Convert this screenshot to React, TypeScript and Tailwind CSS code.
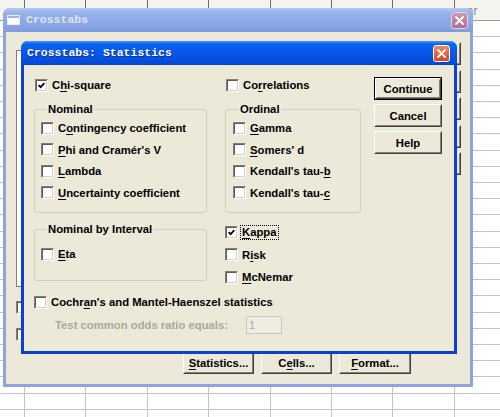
import type { ReactNode } from 'react';

const ROWS = Array.from({ length: 25 });
const COLS = Array.from({ length: 8 });

function U({ children }: { children: ReactNode }) {
  return <span className="underline decoration-1 underline-offset-[2px]">{children}</span>;
}

function Box({ checked = false }: { checked?: boolean }) {
  return (
    <span className="flex h-[13px] w-[13px] shrink-0 border border-t-[#808080] border-l-[#808080] border-r-white border-b-white">
      <span className="flex flex-1 items-center justify-center border border-t-[#5A5A5A] border-l-[#5A5A5A] border-r-[#D4D0C8] border-b-[#D4D0C8] bg-white">
        {checked && (
          <svg width="7" height="7" viewBox="0 0 7 7">
            <path d="M0.6 3.2 L2.6 5.2 L6.4 1.2" fill="none" stroke="#000" strokeWidth="1.7" />
          </svg>
        )}
      </span>
    </span>
  );
}

function Btn({ children, isDefault = false, className = '' }: { children?: ReactNode; isDefault?: boolean; className?: string }) {
  return (
    <div className={`${className} shrink-0 ${isDefault ? 'border border-black' : ''}`}>
      <div className="flex h-full w-full border border-t-white border-l-white border-r-[#404040] border-b-[#404040]">
        <div className="flex flex-1 items-center justify-center border border-t-[#ECE9D8] border-l-[#ECE9D8] border-r-[#808080] border-b-[#808080] bg-[#ECE9D8] text-[11.3px] font-bold leading-[14px] text-black">
          {children}
        </div>
      </div>
    </div>
  );
}

function Opt({ children, checked = false, className = '' }: { children: ReactNode; checked?: boolean; className?: string }) {
  return (
    <div className={`flex items-center gap-[4px] ${className}`}>
      <Box checked={checked} />
      <span className="whitespace-nowrap text-[11.3px] font-bold leading-[14px] text-black">{children}</span>
    </div>
  );
}

function Group({ title, children, className = '' }: { title: string; children: ReactNode; className?: string }) {
  return (
    <fieldset className={`rounded-[3px] border border-[#D0D0BF] ${className}`}>
      <legend className="ml-[5px] px-[2px] text-[11.3px] font-bold leading-[14px] text-black">{title}</legend>
      {children}
    </fieldset>
  );
}

function Sheet() {
  return (
    <div className="flex flex-col">
      <div className="flex h-[21px] shrink-0 border-b border-[#9C9C9C] bg-[#F4F3EE]">
        <div className="w-[25px] shrink-0 border-r border-[#6E6E6E]" />
        {COLS.map((_, i) => (
          <div key={i} className="flex w-[61.4px] shrink-0 items-end border-r border-[#6E6E6E] pb-[2px] pl-[6px] text-[12px] leading-[14px] text-[#8A8A8A]">
            {i === 7 ? 'var' : ''}
          </div>
        ))}
      </div>
      {ROWS.map((_, r) => (
        <div key={r} className="flex h-[16.21px] shrink-0">
          <div className="w-[25px] shrink-0 border-r border-b border-[#C4C4C4]" />
          {COLS.map((_, i) => (
            <div key={i} className="w-[61.4px] shrink-0 border-r border-b border-[#C4C4C4]" />
          ))}
        </div>
      ))}
    </div>
  );
}

function OuterWindow() {
  return (
    <div className="absolute left-[3px] top-[8px] flex h-[379px] w-[470px] flex-col rounded-t-[7px] bg-[#8EA4E2]">
      <div className="flex h-[24px] shrink-0 items-center rounded-t-[7px] bg-[linear-gradient(to_bottom,#B4C8F2_0%,#98B1EA_20%,#8BA6E6_70%,#7F9BE0_100%)] pl-[4px] pr-[5px]">
        <div className="flex h-[10px] w-[13px] flex-col border border-[#E8F0FF] bg-white">
          <div className="h-[2px] bg-[#9DB5EC]" />
        </div>
        <span className="ml-[6px] font-['Liberation_Mono',monospace] text-[11.5px] font-bold leading-[14px] text-[#DCE6FA]">
          Crosstabs
        </span>
        <div className="ml-auto flex h-[17px] w-[17px] items-center justify-center rounded-[3px] border border-[#E6D2E0] bg-[linear-gradient(to_bottom,#CE98B6,#AE6E94)]">
          <svg width="9" height="9" viewBox="0 0 9 9">
            <path d="M1 1 L8 8 M8 1 L1 8" stroke="#fff" strokeWidth="1.8" strokeLinecap="round" />
          </svg>
        </div>
      </div>
      <div className="mx-[3px] mb-[3px] flex flex-1 flex-col bg-[#ECE9D8]">
        <div className="flex h-[319px] justify-between">
          <div className="flex flex-col pl-[10px] pt-[18px]">
            <div className="h-[237px] w-[200px] border border-[#7F7F7F] bg-white" />
            <div className="mt-[14px] flex flex-col gap-[14px]">
              <Box />
              <Box />
            </div>
          </div>
          {/* OK / Paste / Reset / Cancel / Help sit under the statistics dialog */}
          <div className="flex flex-col gap-[4.5px] pr-[9px] pt-[10px]">
            <Btn className="h-[23px] w-[71px]" />
            <Btn className="h-[23px] w-[71px]" />
            <Btn className="h-[23px] w-[71px]" />
            <Btn className="h-[23px] w-[71px]" />
            <Btn className="h-[23px] w-[71px]" />
          </div>
        </div>
        <div className="flex gap-[7px] pl-[177px]">
          <Btn className="h-[23px] w-[71px]">
            <U>S</U>tatistics...
          </Btn>
          <Btn className="h-[23px] w-[71px]">
            C<U>e</U>lls...
          </Btn>
          <Btn className="h-[23px] w-[72px]">
            <U>F</U>ormat...
          </Btn>
        </div>
      </div>
    </div>
  );
}

function StatsDialog() {
  return (
    <div className="absolute left-[21px] top-[41px] flex h-[313px] w-[436px] flex-col rounded-t-[7px] bg-[#0B3FD6]">
      <div className="flex h-[24px] shrink-0 items-center rounded-t-[7px] bg-[linear-gradient(to_bottom,#4A9BFF_0%,#0C62EE_12%,#0656E8_55%,#0447D5_100%)] pl-[6px] pr-[7px]">
        <span className="font-['Liberation_Mono',monospace] text-[11.5px] font-bold leading-[14px] text-white [text-shadow:1px_1px_0_#0A2E9A]">
          Crosstabs: Statistics
        </span>
        <div className="ml-auto flex h-[17px] w-[17px] items-center justify-center rounded-[3px] border border-white bg-[linear-gradient(to_bottom,#EC8A66,#D2481E)]">
          <svg width="9" height="9" viewBox="0 0 9 9">
            <path d="M1 1 L8 8 M8 1 L1 8" stroke="#fff" strokeWidth="1.8" strokeLinecap="round" />
          </svg>
        </div>
      </div>
      <div className="mx-[3px] mb-[3px] flex flex-1 flex-col bg-[#ECE9D8] pl-[10px] pt-[12px]">
        <div className="flex h-[217px]">
          <div className="flex w-[173px] shrink-0 flex-col">
            <Opt checked className="h-[16px] pl-[1px]">
              C<U>h</U>i-square
            </Opt>
            <Group title="Nominal" className="mt-[9px] pb-[8.5px] pl-[6px] pt-[1.5px]">
              <Opt className="h-[21.5px]">
                C<U>o</U>ntingency coefficient
              </Opt>
              <Opt className="h-[21.5px]">
                <U>P</U>hi and Cramér's V
              </Opt>
              <Opt className="h-[21.5px]">
                <U>L</U>ambda
              </Opt>
              <Opt className="h-[21.5px]">
                <U>U</U>ncertainty coefficient
              </Opt>
            </Group>
            <Group title="Nominal by Interval" className="mt-[9px] pb-[15.25px] pl-[6px] pt-[7.25px]">
              <Opt className="h-[21.5px]">
                <U>E</U>ta
              </Opt>
            </Group>
          </div>
          <div className="ml-[18px] flex w-[136px] shrink-0 flex-col">
            <Opt className="h-[16px] pl-[1px]">
              Co<U>r</U>relations
            </Opt>
            <Group title="Ordinal" className="mt-[9px] pb-[8.5px] pl-[7px] pt-[1.5px]">
              <Opt className="h-[21.5px]">
                <U>G</U>amma
              </Opt>
              <Opt className="h-[21.5px]">
                <U>S</U>omers' d
              </Opt>
              <Opt className="h-[21.5px]">
                Kendall's tau-<U>b</U>
              </Opt>
              <Opt className="h-[21.5px]">
                Kendall's tau-<U>c</U>
              </Opt>
            </Group>
            <div className="mt-[7.75px] flex flex-col">
              <div className="flex h-[22.5px] items-center gap-[2px]">
                <Box checked />
                <span className="border border-dotted border-black px-[1px] text-[11.3px] font-bold leading-[13px] text-black">
                  <U>K</U>appa
                </span>
              </div>
              <Opt className="h-[22.5px]">
                R<U>i</U>sk
              </Opt>
              <Opt className="h-[22.5px]">
                <U>M</U>cNemar
              </Opt>
            </div>
          </div>
          <div className="ml-[13px] flex flex-col gap-[4px]">
            <Btn isDefault className="h-[23px] w-[68px]">
              Continue
            </Btn>
            <Btn className="h-[23px] w-[68px]">Cancel</Btn>
            <Btn className="h-[23px] w-[68px]">Help</Btn>
          </div>
        </div>
        <Opt className="h-[16px]">
          Cochr<U>a</U>n's and Mantel-Haenszel statistics
        </Opt>
        <div className="mt-[6px] flex h-[18px] items-center pl-[21px]">
          <span className="w-[191px] shrink-0 whitespace-nowrap text-[11.3px] font-bold leading-[14px] text-[#ACA899]">
            Test common odds ratio equals:
          </span>
          <div className="flex h-[18px] w-[36px] items-center border border-[#C9C7BA] bg-[#EEECE3] pl-[2px] text-[11.3px] leading-[14px] text-[#ACA899]">
            1
          </div>
        </div>
      </div>
    </div>
  );
}

export default function App() {
  return (
    <div className="relative h-[417px] w-[500px] overflow-hidden bg-white font-['Liberation_Sans',Arial,sans-serif]">
      <Sheet />
      <OuterWindow />
      <StatsDialog />
    </div>
  );
}
